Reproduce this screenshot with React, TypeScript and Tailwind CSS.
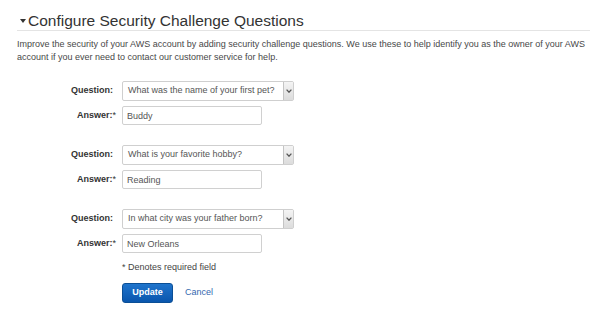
import React from 'react';

const questions = [
  { question: 'What was the name of your first pet?', answer: 'Buddy' },
  { question: 'What is your favorite hobby?', answer: 'Reading' },
  { question: 'In what city was your father born?', answer: 'New Orleans' },
];

function FakeSelect({ value }: { value: string }) {
  return (
    <div className="flex h-[20px] w-[172px] items-stretch rounded-[2px] border border-[#cfcfcf] bg-white">
      <div className="flex flex-1 items-center pl-[5px] text-[9px] text-[#555]">{value}</div>
      <div className="flex w-[10px] items-center justify-center border-l border-[#c4c4c4] bg-gradient-to-b from-[#f4f4f4] to-[#dcdcdc]">
        <svg width="6" height="4" viewBox="0 0 6 4">
          <path d="M0.6 0.6 L3 3.2 L5.4 0.6" fill="none" stroke="#555" strokeWidth="1.3" />
        </svg>
      </div>
    </div>
  );
}

export default function App() {
  return (
    <div className="min-h-screen bg-white pl-[17px] font-['Liberation_Sans',Arial,sans-serif]">
      <div className="w-[573px]">
        <h2 className="mt-[12px] flex items-center border-b border-[#e4e4e4] text-[15.5px] leading-[18px] text-[#333]">
          <svg width="6" height="4" viewBox="0 0 6 4" className="ml-[3px] mr-[2px]">
            <path d="M0 0 L6 0 L3 4 Z" fill="#333" />
          </svg>
          Configure Security Challenge Questions
        </h2>

        <p className="mt-[7px] text-[9px] leading-[13px] text-[#484848]">
          Improve the security of your AWS account by adding security challenge questions. We use these to help identify
          you as the owner of your AWS account if you ever need to contact our customer service for help.
        </p>

        <div className="mt-[17px] flex flex-col gap-[20px]">
          {questions.map((q, i) => (
            <div key={i} className="flex flex-col gap-[5px]">
              <div className="flex items-center">
                <label className="w-[96px] text-right text-[9px] font-bold text-[#333]">Question:</label>
                <div className="ml-[9px]">
                  <FakeSelect value={q.question} />
                </div>
              </div>
              <div className="flex items-center">
                <label className="w-[96px] text-right text-[9px] font-bold text-[#333]">
                  Answer:<span className="-mr-[3px] font-normal">*</span>
                </label>
                <input
                  type="text"
                  defaultValue={q.answer}
                  className="ml-[9px] h-[19px] w-[140px] rounded-[2px] border border-[#d0d0d0] bg-white pl-[4px] text-[9px] text-[#555] outline-none"
                />
              </div>
            </div>
          ))}
        </div>

        <p className="ml-[105px] mt-[8px] text-[9px] leading-[13px] text-[#444]">* Denotes required field</p>

        <div className="ml-[105px] mt-[9px] flex items-center gap-[12px]">
          <button
            type="button"
            className="h-[20px] w-[51px] rounded-[3px] border border-[#0b4f96] bg-gradient-to-b from-[#1f74cc] to-[#0a56ad] text-[9px] font-bold text-white"
          >
            Update
          </button>
          <a href="#" className="text-[9px] text-[#3568b0]">
            Cancel
          </a>
        </div>
      </div>
    </div>
  );
}
